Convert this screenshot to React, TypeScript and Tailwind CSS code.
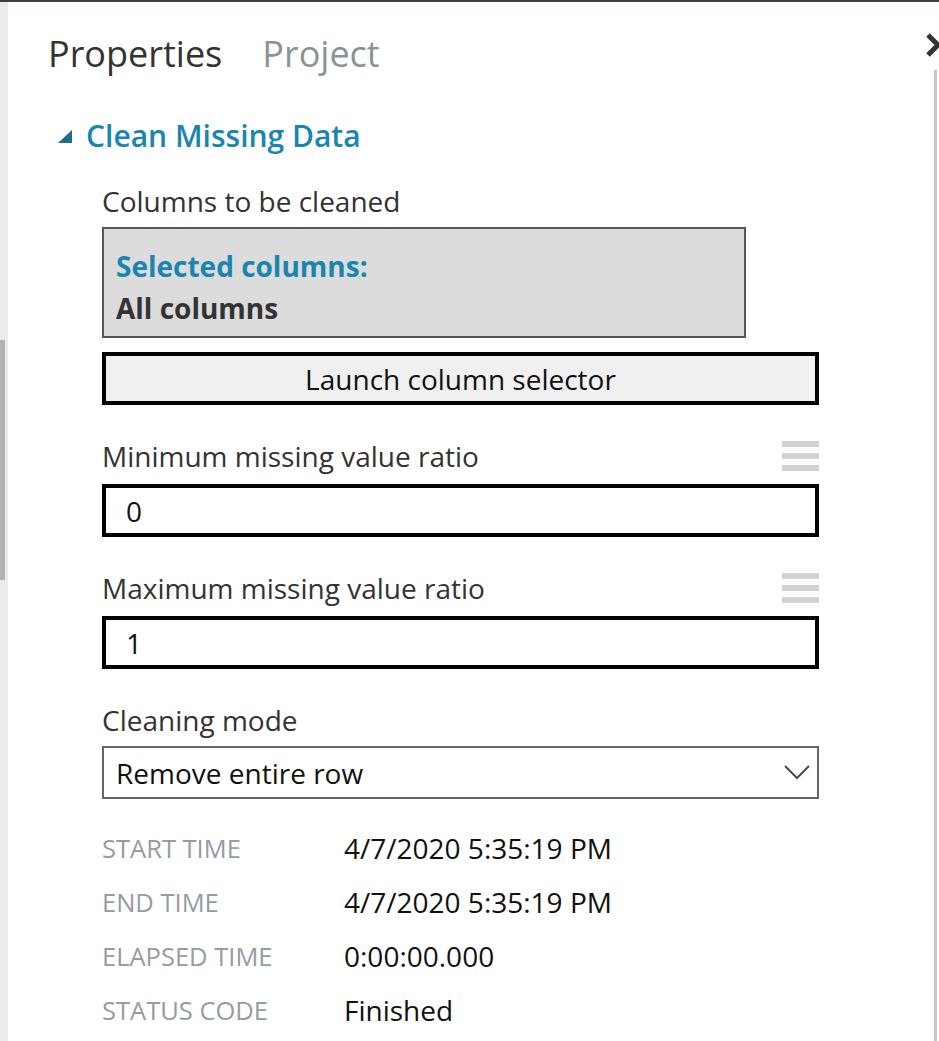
const font = { fontFamily: '"Open Sans", "Noto Sans", sans-serif' };

function Handle() {
  return (
    <div className="flex flex-col gap-[6px] w-[37px]">
      <div className="h-[6px] bg-[#d2d2d2]" />
      <div className="h-[6px] bg-[#d2d2d2]" />
      <div className="h-[6px] bg-[#d2d2d2]" />
    </div>
  );
}

function InfoRow({ label, value }: { label: string; value: string }) {
  return (
    <div className="flex items-center h-[54px]">
      <div className="w-[242px] text-[25.5px] text-[#959ca3]">{label}</div>
      <div className="text-[28px] text-[#111]">{value}</div>
    </div>
  );
}

export default function App() {
  return (
    <div
      style={font}
      className="w-[939px] h-[1041px] bg-white border-t-2 border-[#3c4147] flex overflow-hidden"
    >
      {/* left scroll strip */}
      <div className="w-[8px] bg-[#ececec] flex flex-col">
        <div className="h-[338px]" />
        <div className="h-[240px] w-[5px] bg-[#b3b3b3]" />
      </div>

      <main className="flex-1 pl-[40px]">
        <div className="flex items-end gap-[40px] h-[70px]">
          <h2 className="text-[36px] leading-none text-[#333]">Properties</h2>
          <h2 className="text-[36px] leading-none text-[#8b9299]">Project</h2>
        </div>

        <div className="flex items-center gap-[14px] mt-[46px] pl-[10px] h-[36px]">
          <svg width="14" height="13" viewBox="0 0 14 13">
            <polygon points="14,0 14,13 0,13" fill="#1f6d8e" />
          </svg>
          <h3 className="text-[30px] font-semibold text-[#1a86b0] leading-none">
            Clean Missing Data
          </h3>
        </div>

        <div className="pl-[54px] mt-[33px]">
          <div className="text-[28px] text-[#333] leading-none h-[40px]">Columns to be cleaned</div>

          <div className="w-[644px] h-[111px] bg-[#dcdcdc] border-2 border-[#555] pl-[12px] pt-[16px]">
            <div className="text-[28px] font-bold text-[#1a86b0] leading-[42px]">Selected columns:</div>
            <div className="text-[28px] font-bold text-[#333] leading-[42px]">All columns</div>
          </div>

          <button className="mt-[14px] w-[717px] h-[53px] border-4 border-black bg-[#f0f0f0] text-[28px] text-[#111]">
            Launch column selector
          </button>

          <div className="flex items-center justify-between w-[717px] mt-[35px] h-[32px]">
            <div className="text-[28px] text-[#333] leading-[32px]">Minimum missing value ratio</div>
            <Handle />
          </div>
          <div className="mt-[12px] w-[717px] h-[53px] border-4 border-black flex items-center pl-[20px] text-[28px] text-[#111]">
            0
          </div>

          <div className="flex items-center justify-between w-[717px] mt-[35px] h-[32px]">
            <div className="text-[28px] text-[#333] leading-[32px]">Maximum missing value ratio</div>
            <Handle />
          </div>
          <div className="mt-[12px] w-[717px] h-[53px] border-4 border-black flex items-center pl-[20px] text-[28px] text-[#111]">
            1
          </div>

          <div className="mt-[35px] text-[28px] text-[#333] h-[32px] leading-[32px]">Cleaning mode</div>
          <div className="mt-[10px] w-[717px] h-[53px] border-2 border-[#666] flex items-center justify-between pl-[12px] pr-[7px] text-[28px] text-[#111]">
            <span>Remove entire row</span>
            <svg width="26" height="15" viewBox="0 0 26 15">
              <polyline points="1,1 13,13 25,1" fill="none" stroke="#4a4a4a" strokeWidth="2" />
            </svg>
          </div>

          <div className="mt-[22px]">
            <InfoRow label="START TIME" value="4/7/2020 5:35:19 PM" />
            <InfoRow label="END TIME" value="4/7/2020 5:35:19 PM" />
            <InfoRow label="ELAPSED TIME" value="0:00:00.000" />
            <InfoRow label="STATUS CODE" value="Finished" />
          </div>
        </div>
      </main>

      {/* right edge: collapse chevron + scroll line */}
      <div className="w-[16px] flex flex-col items-end">
        <div className="h-[30px]" />
        <svg width="16" height="26" viewBox="0 0 16 26" className="-mr-[2px]">
          <path d="M3 3 L13 13 L3 23" fill="none" stroke="#2f3439" strokeWidth="5" />
        </svg>
        <div className="mt-[12px] w-[3px] flex-1 bg-[#c8c8c8] mr-[2px]" />
      </div>
    </div>
  );
}
